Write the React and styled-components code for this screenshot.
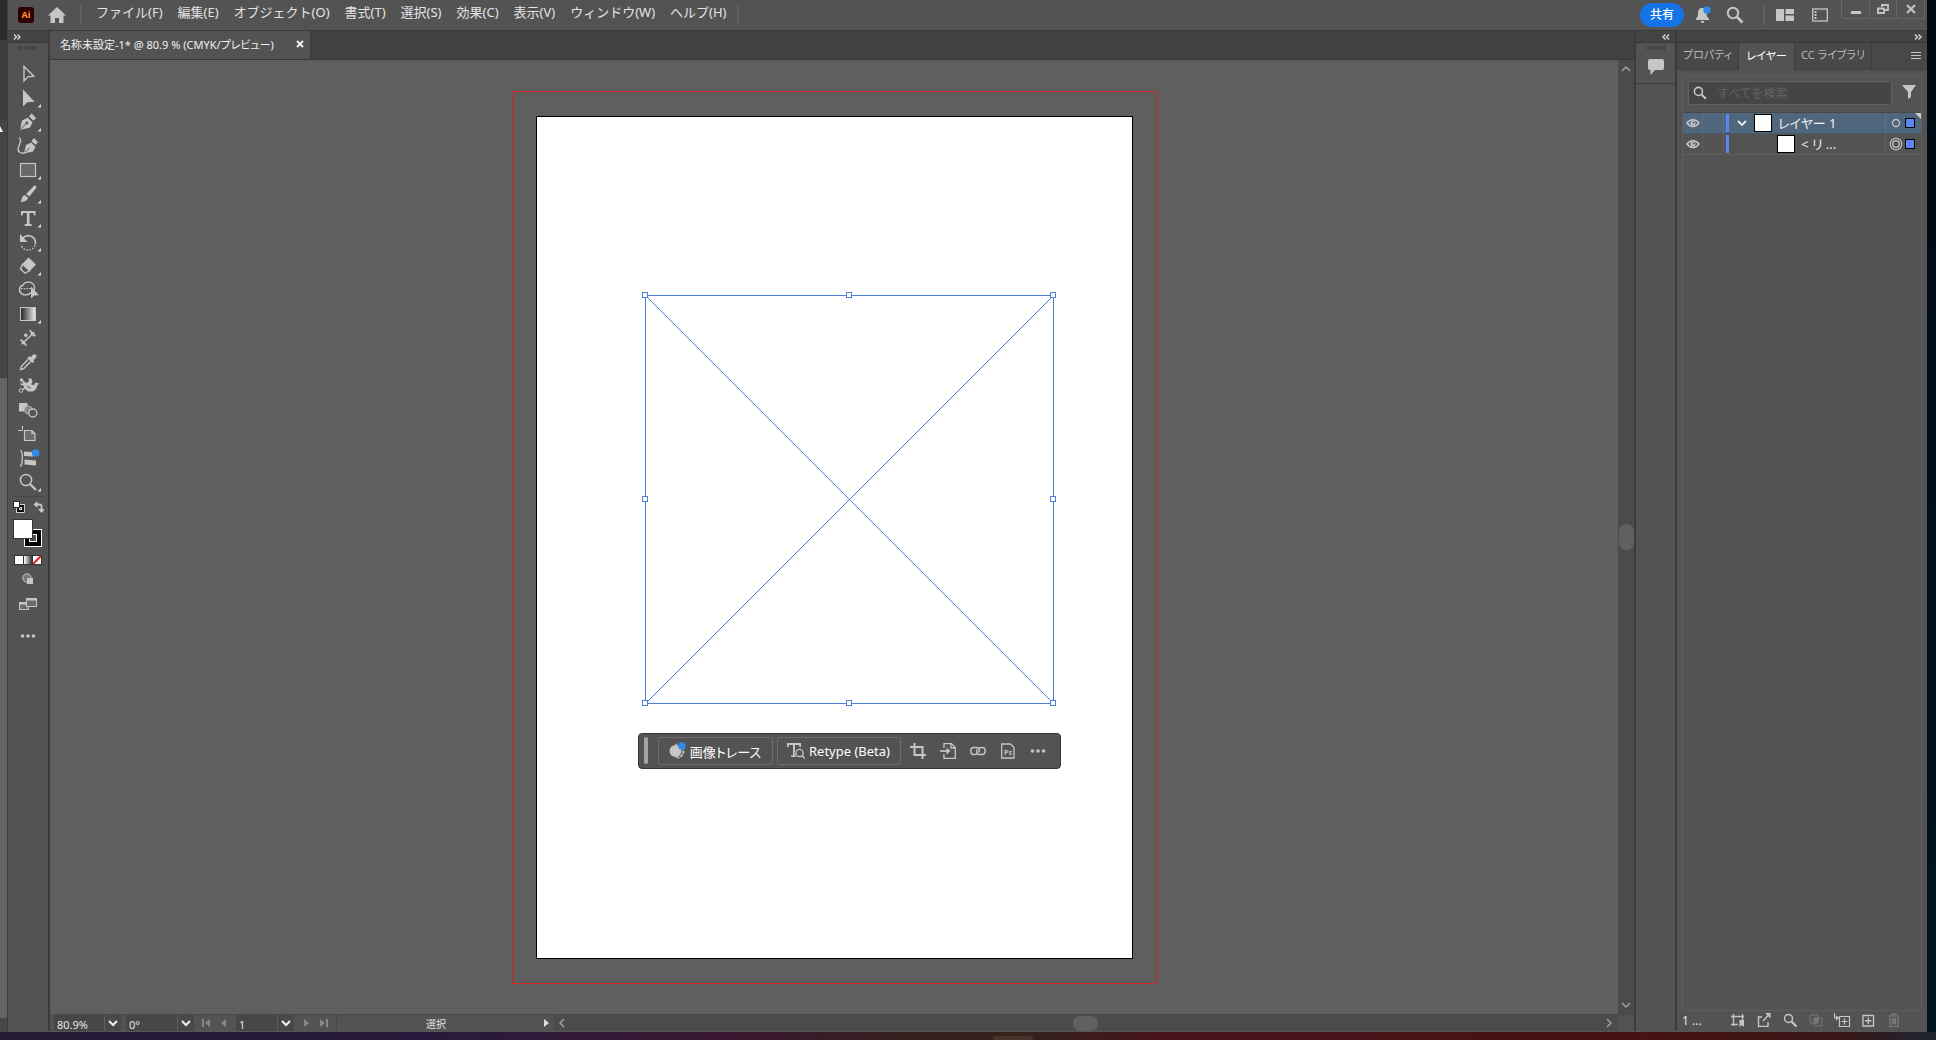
import React, { useState } from "react";
import styled, { createGlobalStyle, css } from "styled-components";

const GlobalStyle = createGlobalStyle`
    * { box-sizing: border-box; }
    html, body { margin: 0; height: 100%; }
    body {
        background: #424242;
        color: #e4e4e4;
        font-family: "Noto Sans", "Noto Sans CJK JP", sans-serif;
        font-size: 13px;
        overflow: hidden;
    }
    button, input, select { font: inherit; color: inherit; }
    svg { display: block; flex: none; }
`;

const Screen = styled.div`
    display: flex;
    flex-direction: column;
    height: 100vh;
`;

const Desktop = styled.div`
    display: flex;
    flex: 1;
    min-height: 0;
`;

const BehindLeft = styled.div`
    position: relative;
    width: 8px;
    background: linear-gradient(#2b2b2b 40px, #3d3d3d 40px, #3d3d3d 120px, #454545 120px, #454545 378px, #646464 378px, #646464 1018px, #484848 1018px);
    border-right: 1px solid #3b3b3b;
`;

const PointerTail = styled.svg`
    position: absolute;
    left: 0;
    top: 126px;
`;

const BehindRight = styled.div`
    width: 9px;
    background: linear-gradient(#000a12, #001420);
`;

const Taskbar = styled.div`
    position: relative;
    height: 8px;
    background: linear-gradient(90deg, #231a33 0%, #281a3c 22%, #3a1630 38%, #35211c 48%, #35211c 54%, #48121c 60%, #481212 84%, #3a1718 95%, #1c2430 100%);
`;

const TaskbarItem = styled.div`
    position: absolute;
    left: 993px;
    bottom: 0;
    width: 40px;
    height: 4px;
    border-radius: 3px 3px 0 0;
    background: #48332a;
`;

const Window = styled.div`
    display: flex;
    flex-direction: column;
    flex: 1;
    min-width: 0;
    border-bottom: 1px solid #5c5357;
    background: #535353;
`;

const plainButton = css`
    display: flex;
    align-items: center;
    justify-content: center;
    padding: 0;
    border: 0;
    background: none;
`;

const IconButton = styled.button`
    ${plainButton}
    width: ${(p) => p.$w || 24}px;
    height: ${(p) => p.$h || 24}px;
    opacity: ${(p) => (p.disabled ? 0.3 : 1)};
`;

/* title bar */

const TitleBar = styled.header`
    display: flex;
    align-items: flex-start;
    height: 31px;
    border-bottom: 1px solid #3a3a3a;
`;

const AppBadge = styled.span`
    width: 16px;
    height: 16px;
    margin: 7px 0 0 10px;
    border-radius: 3px;
    background: #330000;
    color: #ff9a2e;
    font: bold 9px/15px "Open Sans", sans-serif;
    text-align: center;
`;

const Rule = styled.span`
    width: 2px;
    height: 20px;
    margin-top: 5px;
    background: #606060;
`;

const Menu = styled.nav`
    display: flex;
    gap: 15px;
    margin: 0 11px 0 14px;
    line-height: 24px;
    white-space: nowrap;
`;

const MenuItem = styled.button`
    padding: 0;
    border: 0;
    background: none;
`;

const Spacer = styled.span`
    flex: 1;
`;

const Share = styled.button`
    width: 44px;
    height: 24px;
    margin: 3px 7px 0 0;
    padding: 0;
    border: 0;
    border-radius: 12px;
    background: #1473e6;
    color: #fff;
    font-size: 12px;
    font-weight: 500;
    line-height: 24px;
`;

const TitleActions = styled.div`
    display: flex;
    align-items: center;
    gap: 8px;
    padding-top: 3px;
    margin-right: 16px;
`;

const ViewActions = styled.div`
    display: flex;
    gap: 11px;
    margin: 3px 9px 0 8px;
`;

const WindowControls = styled.div`
    display: flex;
    height: 19px;
    margin-right: 2px;
    border: 1px solid #666;
    border-top: 0;
    border-radius: 0 0 3px 3px;

    button + button { border-left: 1px solid #666; }
`;

/* work area */

const WorkArea = styled.div`
    display: flex;
    flex: 1;
    min-height: 0;
`;

const StripHead = styled.div`
    display: flex;
    align-items: center;
    justify-content: ${(p) => (p.$end ? "flex-end" : "flex-start")};
    height: 12px;
    padding: 0 5px;
    border-bottom: 1px solid #383838;
    background: #444;
`;

const ToolColumn = styled.aside`
    width: 42px;
    border-right: 2px solid #3b3b3b;
`;

const Grip = styled.div`
    width: 20px;
    height: 4px;
    margin: 3px auto 0;
    background: repeating-linear-gradient(90deg, #3d3d3d 0 1px, #535353 1px 2px);
`;

const Tools = styled.div`
    display: flex;
    flex-direction: column;
    align-items: center;
    margin-top: 12px;
    padding-bottom: 2px;
`;

const ToolFoot = styled.div`
    display: flex;
    flex-direction: column;
    align-items: center;
    margin: 0 4px;
    border-top: 1px solid #484848;
`;

const Documents = styled.main`
    display: flex;
    flex-direction: column;
    flex: 1;
    min-width: 0;
    border-right: 2px solid #3b3b3b;
`;

const DocumentTabs = styled.div`
    display: flex;
    height: 29px;
    border-bottom: 1px solid #383838;
    background: #424242;
`;

const DocumentTab = styled.div`
    display: flex;
    align-items: center;
    justify-content: space-between;
    width: 261px;
    padding: 0 6px 2px 10px;
    border-right: 1px solid #383838;
    background: #535353;
    color: #f0f0f0;
    font-size: 11px;
    font-feature-settings: "palt";
    white-space: nowrap;
`;

const CanvasRow = styled.div`
    display: flex;
    flex: 1;
    min-height: 0;
`;

const Canvas = styled.div`
    display: flex;
    flex: 1;
    align-items: center;
    justify-content: center;
    min-width: 0;
    background: #5f5f5f;
`;

const Bleed = styled.div`
    padding: 24px 23px;
    border: 1px solid #d02626;
`;

const Artboard = styled.div`
    position: relative;
    width: 597px;
    height: 843px;
    border: 1px solid #000;
    background: #fff;
`;

const PlacedImage = styled.svg`
    position: absolute;
    left: 104px;
    top: 174px;
`;

const ContextBar = styled.div`
    position: absolute;
    left: 101px;
    top: 616px;
    display: flex;
    align-items: center;
    width: 423px;
    height: 36px;
    padding: 0 9px 0 5px;
    border: 1px solid #363636;
    border-radius: 4px;
    background: #535353;
`;

const ContextGrip = styled.span`
    width: 4px;
    height: 27px;
    margin-right: 10px;
    border-radius: 2px;
    background: #a5a5a5;
`;

const ContextButton = styled.button`
    display: flex;
    align-items: center;
    justify-content: center;
    gap: 4px;
    width: ${(p) => p.$w}px;
    height: 28px;
    margin-right: 4px;
    padding: 1px 0 0;
    border: 1px solid #6c6c6c;
    border-radius: 2px;
    background: none;
    color: #fff;
    font-size: 13px;
    font-feature-settings: "palt";
    white-space: nowrap;
`;

const ContextIcons = styled.div`
    display: flex;
    flex: 1;
    justify-content: space-between;
`;

const VerticalScroll = styled.div`
    display: flex;
    flex-direction: column;
    align-items: center;
    justify-content: space-between;
    width: 16px;
    background: #4b4b4b;
`;

const HorizontalScroll = styled.div`
    display: flex;
    flex: 1;
    align-items: center;
    justify-content: space-between;
    background: #4b4b4b;
`;

const Thumb = styled.span`
    width: ${(p) => p.$w}px;
    height: ${(p) => p.$h}px;
    border-radius: 7px;
    background: #606060;
`;

const ScrollCorner = styled.span`
    width: 16px;
    background: #535353;
`;

const StatusBar = styled.footer`
    display: flex;
    height: 17px;
    padding-left: 4px;
    border-top: 1px solid #484848;
    background: #535353;
    font-size: 11px;
`;

const Field = styled.label`
    position: relative;
    width: ${(p) => p.$w}px;
    margin-right: ${(p) => p.$gap || 0}px;
    background: #474747;
    overflow: hidden;
`;

const FieldSelect = styled.select`
    appearance: none;
    width: 100%;
    height: 19px;
    padding: 0 18px 0 3px;
    border: 0;
    background: none;
    line-height: 19px;
`;

const FieldArrow = styled.span`
    position: absolute;
    top: 0;
    right: 0;
    display: flex;
    align-items: center;
    justify-content: center;
    width: 17px;
    height: 16px;
    border-left: 1px solid #5e5e5e;
    background: #484848;
    pointer-events: none;
`;

const Nav = styled.div`
    display: flex;
    width: 42px;
    justify-content: center;
`;

const StatusText = styled.span`
    flex: none;
    width: 201px;
    border-left: 1px solid #484848;
    padding-right: 2px;
    font-size: 10px;
    line-height: 18px;
    text-align: center;
`;

/* panels */

const Docks = styled.aside`
    display: flex;
    width: 291px;
`;

const CollapsedDock = styled.div`
    width: 41px;
    border-right: 2px solid #3b3b3b;
`;

const DockIcon = styled.div`
    display: flex;
    justify-content: center;
    height: 34px;
    border-bottom: 1px solid #3b3b3b;

    button { margin-top: 5px; }
`;

const PanelColumn = styled.div`
    display: flex;
    flex-direction: column;
    flex: 1;
    min-width: 0;
`;

const PanelTabs = styled.div`
    display: flex;
    height: 27px;
    border-bottom: 1px solid #3e3e3e;
    background: #484848;
    font-size: 11px;
    font-feature-settings: "palt";
`;

const PanelTab = styled.button`
    width: ${(p) => p.$w}px;
    height: ${(p) => (p.$active ? 27 : 26)}px;
    padding: 0 0 4px;
    border: 0;
    border-right: 1px solid #3e3e3e;
    background: ${(p) => (p.$active ? "#535353" : "#484848")};
    color: ${(p) => (p.$active ? "#fff" : "#b8b8b8")};
    white-space: nowrap;
`;

const PanelBody = styled.section`
    display: flex;
    flex-direction: column;
    flex: 1;
    margin: 6px 5px 0 5px;
    border: 1px solid #5e5e5e;
    border-radius: 2px;
`;

const SearchRow = styled.div`
    display: flex;
    align-items: center;
    gap: 5px;
    height: 36px;
    padding: 0 0 5px 5px;
    border-bottom: 1px solid #484848;
`;

const SearchBox = styled.label`
    display: flex;
    flex: 1;
    align-items: center;
    height: 24px;
    margin-top: 2px;
    min-width: 0;
    padding-left: 4px;
    border: 1px solid #626262;
    border-radius: 3px;
    background: #454545;
`;

const SearchInput = styled.input`
    flex: 1;
    min-width: 0;
    padding: 0 10px;
    border: 0;
    outline: 0;
    background: none;
    font-size: 12px;

    &::placeholder { color: #636363; opacity: 1; }
`;

const LayerList = styled.ul`
    margin: 0;
    padding: 0;
    list-style: none;
`;

const LayerRow = styled.li`
    position: relative;
    display: flex;
    align-items: center;
    height: 21px;
    border-bottom: 1px solid ${(p) => (p.$active ? "#48596a" : "#616161")};
    background: ${(p) => (p.$active ? "#50667d" : "transparent")};
`;

const LayerCell = styled.span`
    display: flex;
    align-items: center;
    justify-content: center;
    align-self: stretch;
    width: ${(p) => p.$w}px;
    border-right: 1px solid rgba(255, 255, 255, 0.08);
`;

const LayerColor = styled.span`
    width: 3px;
    height: 18px;
    margin: 0 2px;
    background: #5b86f2;
`;

const LayerThumb = styled.span`
    width: 18px;
    height: 18px;
    margin-left: ${(p) => (p.$child ? 24 : 1)}px;
    border: 1px solid #000;
    background: #fff;
`;

const LayerName = styled.span`
    flex: 1;
    padding-left: 6px;
    color: #f0f0f0;
    font-size: 13px;
    line-height: 20px;
    font-feature-settings: "palt";
    white-space: nowrap;
`;

const LayerMarks = styled.span`
    display: flex;
    align-items: center;
    align-self: stretch;
    gap: 3px;
    width: 36px;
    padding-left: 3px;
    border-left: 1px solid rgba(255, 255, 255, 0.08);
`;

const SelectedMark = styled.span`
    width: 8px;
    height: 8px;
    outline: 1px solid #000;
    background: #5b86f2;
`;

const Corner = styled.span`
    position: absolute;
    top: 0;
    right: 0;
    border-top: 6px solid #d0d0d0;
    border-left: 6px solid transparent;
`;

const PanelFoot = styled.footer`
    display: flex;
    align-items: center;
    height: 20px;
    padding: 0 21px 2px 5px;
    font-size: 12px;
`;

const FootIcons = styled.div`
    display: flex;
    flex: 1;
    justify-content: flex-end;
    gap: 2px;
`;

/* icons */

const C = "#c6c6c6";

const Glyph = ({ w = 24, h = 24, children, ...rest }) => (
    <svg width={w} height={h} viewBox={`0 0 ${w} ${h}`} fill="none" stroke="none" aria-hidden="true" {...rest}>
        {children}
    </svg>
);

const Line = (props) => <path stroke={C} strokeWidth="1.5" {...props} />;
const Solid = (props) => <path fill={C} {...props} />;

const Chevron = ({ dir = "down", color = C, strokeWidth = 1.5 }) => {
    const d = {
        down: "M2 4l4 4 4-4",
        up: "M2 8l4-4 4 4",
        left: "M8 2L4 6l4 4",
        right: "M4 2l4 4-4 4",
    }[dir];
    return <Glyph w={12} h={12}><path d={d} stroke={color} strokeWidth={strokeWidth} /></Glyph>;
};

const DoubleChevron = ({ left }) => (
    <Glyph w={8} h={6}>
        <path d={left ? "M3.5 .5L1 3l2.5 2.5M7 .5L4.5 3 7 5.5" : "M1 .5L3.5 3 1 5.5M4.5 .5L7 3 4.5 5.5"} stroke="#d6d6d6" strokeWidth="1.4" />
    </Glyph>
);

// every tool glyph sits in a 32x24 box
const tools = [
    { name: "選択ツール", icon: <Line d="M12 4.5V19l3.800-4.200 6-.6z" strokeWidth="1.4" /> },
    { name: "ダイレクト選択ツール", more: true, icon: <Solid d="M11 3.5V20.5l4.3-4.2 7.2-.5z" /> },
    {
        name: "ペンツール", more: true, icon: <>
            <Solid d="M8 19.8l2-9.2 5.8-2.8 4.8 4.8-2.8 5.2zM17 6.3l2.600-2.800 4.500 4.600-2.600 2.600z" />
            <path d="M8.3 19.4l5.800-5.800" stroke="#535353" /><circle cx="14.8" cy="13" r="1.4" fill="#535353" />
        </>,
    },
    {
        name: "曲線ツール", icon: <>
            <Solid d="M12 19.5l2-8.500 5.200-2.500 4.300 4.500-2.600 4.500zM19.500 7l2.500-3 4 4.200-2.600 2.500z" />
            <path d="M12.500 19l5-5.300" stroke="#535353" />
            <Line d="M7 3.500c2.500 2 2 4 .5 7s-2 6.500.5 8c1.800 1 3.800.8 5.500 0" strokeWidth="1.4" />
        </>,
    },
    { name: "長方形ツール", more: true, icon: <rect x="8.5" y="5.5" width="15" height="13" fill="#686868" stroke={C} strokeWidth="1.2" /> },
    {
        name: "ブラシツール", more: true, icon: <>
            <Solid d="M23.800 3.800c1 .8.6 1.800 0 2.600l-6.500 8.200-3.200-2.600 7.300-7.600c.8-.8 1.600-1.200 2.400-.6zM13 13.200l3 2.500c-.4 3-3.500 4.600-8.200 4 2-1.200 1.800-2.200 2.200-3.800.4-1.600 1.600-2.600 3-2.700z" />
        </>,
    },
    { name: "文字ツール", more: true, icon: <Solid d="M9 5h14.500v4.500H22L21.400 7h-3.900v10.800l2.300.5V20h-7.200v-1.700l2.300-.5V7h-3.700l-.7 2.500H9z" /> },
    {
        name: "回転ツール", more: true, icon: <>
            <Line d="M11 8c4-4 11-2.500 12.300 3.300.2 1 .2 2 0 3" strokeWidth="1.7" /><Solid d="M8 4v8h7.500z" />
            <path d="M23 15.500c-2 5-8.500 6-12 2.500-1-1-1.700-2.200-2-3.500" stroke={C} strokeWidth="1.5" strokeDasharray="1.5 1.5" />
        </>,
    },
    {
        name: "消しゴムツール", more: true, icon: <>
            <Solid d="M16.500 3.500l7.500 7-6 6.200-7.500-7z" />
            <Line d="M10.500 10.300L8.500 15l4.600 4.200 4.600-2.500z" strokeWidth="1.4" />
        </>,
    },
    {
        name: "シェイプ形成ツール", icon: <>
            <Line d="M19 14.500c-2 2.700-6.500 3-9.200 1.300-3.600-2.300-2.800-7.800 1.200-8.600C12.500 3 20.500 3 22.300 8c.5 1.600.3 3.400-.4 4.700" strokeWidth="1.4" />
            <Line d="M9 10.700h11" strokeWidth="1.3" strokeDasharray="1.5 1.2" /><Solid d="M19 8.500v12l3-3 5-.2z" />
        </>,
    },
    {
        name: "グラデーションツール", more: true, icon: <>
            <defs><linearGradient id="toolGradient"><stop stopColor="#222" /><stop offset="1" stopColor="#eee" /></linearGradient></defs>
            <rect x="8.5" y="5.5" width="15" height="13" fill="url(#toolGradient)" stroke={C} />
        </>,
    },
    {
        name: "ものさしツール", icon: <>
            <Line d="M11 17L21 7.500M8.500 13.500l6 6.300M17.500 4l6 6.300" strokeWidth="1.5" />
            <Solid d="M9.500 18.500l.6-5 4.300 4.300zM22.500 6l-.6 5-4.300-4.300zM11.500 9l2.500-2 2 2.500-2.500 2z" />
        </>,
    },
    {
        name: "スポイトツール", icon: <>
            <Solid d="M18.700 7.300l2-2.300c1-1 2.500-1 3.200-.2.800.8.800 2.200-.2 3.200l-2.300 2.200 1 1-2 1.800-5-5 1.800-1.800z" />
            <Line d="M16.300 9.300l-7 7.200-.8 3 3-.7 7.200-7.200" strokeWidth="1.4" />
        </>,
    },
    {
        name: "パペットワープツール", icon: <>
            <Solid d="M10 5.500l4 3.500 3-1.500-.5-3 3 0 1 3.500-1.500 2.500 3 .5 1.500-2.500 3.500 1-1.500 1.500-1.500 4-3 2.500h-5l-3-2.500-1.500-3z" />
            <Line d="M8.500 10l5 1M9.500 16.500l5-4" strokeWidth="1.5" />
            <path d="M15 12l4 2.500" stroke="#535353" />
            <circle cx="9" cy="16.500" r="1.800" fill="#535353" stroke={C} /><circle cx="9.500" cy="6" r="1.700" fill={C} />
        </>,
    },
    {
        name: "ブレンドツール", icon: <>
            <rect x="7" y="5" width="8.5" height="8.5" fill={C} />
            <circle cx="16.500" cy="12" r="4" fill="#858585" stroke="#a8a8a8" /><circle cx="20.800" cy="15" r="4" fill="#535353" stroke={C} strokeWidth="1.3" />
        </>,
    },
    {
        name: "アートボードツール", icon: <>
            <path d="M12.500 8.500H20l3 3v7H12.500z" fill="#6d6d6d" stroke={C} strokeWidth="1.2" />
            <Line d="M6 8.500h5M10.500 4v3.500M20 8.500v3h3" strokeWidth="1.2" />
        </>,
    },
    {
        name: "配置ツール", icon: <>
            <Line d="M8.500 4c2 2 1.800 4 1.800 8s.2 6-1.800 8.500" strokeWidth="1.3" />
            <Solid d="M12 5.500l9 .5v4.500l-9-.5zM12.500 13.500l11.500 1v5l-11.500-1z" /><circle cx="23.600" cy="7" r="3.800" fill="#2d8ceb" />
        </>,
    },
    {
        name: "ズームツール", more: true, icon: <>
            <circle cx="14" cy="10" r="5.600" stroke={C} strokeWidth="1.5" /><Line d="M18 14l6 6" strokeWidth="2.2" />
        </>,
    },
];

const ToolGlyph = ({ icon, more }) => (
    <Glyph w={32} h={24}>
        {icon}
        {more && <path d="M29 18v3.500h-3.500z" fill="#dedede" />}
    </Glyph>
);

const ColorGlyph = () => (
    <Glyph w={32} h={57}>
        <path d="M6 9h5v5H6z" stroke="#fff" strokeWidth="3.400" /><path d="M6 9h5v5H6z" stroke="#000" strokeWidth="1.800" />
        <path d="M1.500 4.500h6v6h-6z" fill="#fff" stroke="#222" />
        <path d="M24 7.500h3.500c1.500 0 2 .8 2 2V13" stroke={C} strokeWidth="1.800" />
        <path d="M25.500 4v7L21.500 7.500zM26 12h7l-3.500 4z" fill={C} />
        <rect x="12.500" y="32.500" width="17" height="17" fill="#000" stroke="#fff" />
        <rect x="17.500" y="37.500" width="7" height="7" fill="#535353" stroke="#fff" />
        <rect x="1.500" y="22.500" width="19" height="19" fill="#fff" stroke="#333" />
    </Glyph>
);

const ModeGlyph = () => (
    <Glyph w={28} h={10}>
        <defs><linearGradient id="modeGradient"><stop stopColor="#fff" /><stop offset="1" stopColor="#333" /></linearGradient></defs>
        <rect x=".5" y=".5" width="27" height="9" fill="#fff" stroke="#333" />
        <rect x="10" y="1" width="8" height="8" fill="url(#modeGradient)" />
        <path d="M9.500 1v8M18.500 1v8" stroke="#333" />
        <path d="M19 9l8-8" stroke="#e01e1e" strokeWidth="2" />
    </Glyph>
);

const Search = ({ size = 18 }) => (
    <svg width={size} height={size} viewBox="0 0 18 18" fill="none" stroke={C} aria-hidden="true">
        <circle cx="7" cy="7" r="5.200" strokeWidth="2" /><path d="M11 11l5.500 5.500" strokeWidth="2.600" />
    </svg>
);

const Eye = () => (
    <Glyph w={14} h={10}>
        <path d="M1 5c3-4.500 9-4.500 12 0-3 4.500-9 4.500-12 0z" stroke={C} strokeWidth="1.500" />
        <circle cx="7" cy="5" r="2.500" fill={C} /><circle cx="7.600" cy="4.600" r="1" fill="#535353" />
    </Glyph>
);

const Dots = ({ w = 16 }) => (
    <Glyph w={w} h={6}>
        {[-5.5, 0, 5.5].map((x) => <circle key={x} cx={w / 2 + x} cy="3" r="1.8" fill={C} />)}
    </Glyph>
);

const menus = ["ファイル(F)", "編集(E)", "オブジェクト(O)", "書式(T)", "選択(S)", "効果(C)", "表示(V)", "ウィンドウ(W)", "ヘルプ(H)"];

const contextIcons = [
    { name: "画像を切り抜き", icon: <Line d="M4.500 0v12H16M0 4h12.500v12" strokeWidth="2" /> },
    { name: "埋め込み", icon: <><Line d="M4 5V.7h7.500L15.300 4.500V15.300H4V11M11 1v4h4" strokeWidth="1.300" /><Line d="M0 8h8" strokeWidth="1.700" /><Solid d="M6.500 4.500L10.500 8l-4 3.500z" /></> },
    { name: "リンク", icon: <Line d="M7 10.800c-1 .6-2.200.7-3.200.7C2 11.500.8 10 .8 8S2 4.500 4 4.500h2c2 0 3.300 1.300 3.300 3.300 0 .7-.1 1.200-.5 1.700M9 5.200c1-.6 2.200-.7 3.200-.7 1.800 0 3 1.500 3 3.500s-1.200 3.500-3.200 3.500h-2c-2 0-3.300-1.300-3.300-3.300 0-.7.1-1.200.5-1.700" strokeWidth="1.500" /> },
    { name: "Photoshop で編集", icon: <><Line d="M1.700 1h8.800L14 4.500V15H1.700z" strokeWidth="1.300" /><text x="4" y="11.500" fill={C} fontSize="7" fontWeight="bold" fontFamily="Open Sans">Ps</text></> },
];

const footIcons = [
    { name: "書き出し用に追加", icon: <><Line d="M2.500 1v12M0 3.500h13M11.500 1v6M0 11.500h7" strokeWidth="1.300" /><Solid d="M8.500 7H13v7l-2.200-2L8.500 14z" /></> },
    { name: "書き出し", icon: <><Line d="M5 4H1.500v9.500h9.500V9M6 8l6-6.500" strokeWidth="1.400" /><Solid d="M8 0h5.500v5.500z" /></> },
    { name: "オブジェクトの位置", icon: <><circle cx="5.500" cy="5.500" r="4" stroke={C} strokeWidth="1.500" /><Line d="M8.500 8.500l5 5" strokeWidth="2.200" /></> },
    { name: "クリッピングマスク", disabled: true, icon: <><path d="M1 2h8v8H1zM5 5h8v8H5z" stroke="#ccc" /><path d="M5 5h5v5H5z" fill="#ccc" /></> },
    { name: "新規サブレイヤー", w: 18, icon: <><Line d="M6.500 3.500h10v10h-10zM11.500 5.500v6M8.500 8.500h6M1.500 0v5H4" strokeWidth="1.200" /><Solid d="M3 2.500L6.500 5 3 7.500z" /></> },
    { name: "新規レイヤー", icon: <Line d="M2 2.500h10.500V13H2zM7.250 4.500V11M4 7.750h6.500" strokeWidth="1.300" /> },
    { name: "削除", disabled: true, icon: <path d="M1.500 3h11M5 3V1h4v2M3 3v10.500h8V3M5.500 5v6.500M7 5v6.500M8.500 5v6.500" stroke="#ddd" strokeWidth="1.200" /> },
];

const StatusField = ({ label, value, options, w, gap }) => (
    <Field $w={w} $gap={gap}>
        <FieldSelect aria-label={label} defaultValue={value}>
            {options.map((o) => <option key={o}>{o}</option>)}
        </FieldSelect>
        <FieldArrow><Chevron color="#eee" strokeWidth={2} /></FieldArrow>
    </Field>
);

const handles = [[0, 0], [204, 0], [408, 0], [0, 204], [408, 204], [0, 408], [204, 408], [408, 408]];

const SelectionFrame = () => (
    <PlacedImage width="417" height="417" fill="none" stroke="#4f80d9">
        <path d="M4.500 4.500h408v408h-408zM4.500 4.500l408 408M412.500 4.500l-408 408" />
        {handles.map(([x, y]) => <rect key={x + "-" + y} x={x + 1.5} y={y + 1.5} width="5" height="5" fill="#fff" />)}
    </PlacedImage>
);

const DocumentArea = () => (
    <Documents>
        <DocumentTabs>
            <DocumentTab>
                <span>名称未設定-1* @ 80.9 % (CMYK/プレビュー)</span>
                <IconButton $w={8} $h={8} aria-label="閉じる">
                    <Glyph w={8} h={8}><path d="M1 1l6 6M7 1L1 7" stroke="#eee" strokeWidth="2" /></Glyph>
                </IconButton>
            </DocumentTab>
        </DocumentTabs>
        <CanvasRow>
            <Canvas>
                <Bleed>
                    <Artboard>
                        <SelectionFrame />
                        <ContextBar>
                            <ContextGrip />
                            <ContextButton $w={115}>
                                <Glyph w={17} h={18}>
                                    <path d="M13 5c3 4 1 9-3 10.500" stroke={C} strokeWidth="2" strokeDasharray="3 1" />
                                    <circle cx="6.500" cy="9" r="6" fill={C} /><path d="M6 15l4 2-1-3zM6 3l2-2v3z" fill={C} />
                                    <circle cx="13" cy="4" r="3.800" fill="#2d8ceb" />
                                </Glyph>
                                画像トレース
                            </ContextButton>
                            <ContextButton $w={124}>
                                <Glyph w={18} h={18}>
                                    <Solid d="M0 1h14v4h-1.500L12 3H8v10.500h2V15H4v-1.500h2V3H2L1.500 5H0z" />
                                    <circle cx="12.500" cy="11" r="5" fill="#535353" /><circle cx="12.500" cy="11" r="3.600" stroke={C} strokeWidth="1.300" />
                                    <Line d="M15 13.500l3 3" />
                                </Glyph>
                                Retype (Beta)
                            </ContextButton>
                            <ContextIcons>
                                {contextIcons.map((i) => (
                                    <IconButton key={i.name} $w={26} aria-label={i.name}><Glyph w={16} h={16}>{i.icon}</Glyph></IconButton>
                                ))}
                                <IconButton $w={26} aria-label="その他"><Dots /></IconButton>
                            </ContextIcons>
                        </ContextBar>
                    </Artboard>
                </Bleed>
            </Canvas>
            <VerticalScroll>
                <IconButton $w={16} $h={18} aria-label="上へ"><Chevron dir="up" color="#a0a0a0" /></IconButton>
                <Thumb $w={15} $h={26} />
                <IconButton $w={16} $h={18} aria-label="下へ"><Chevron color="#a0a0a0" /></IconButton>
            </VerticalScroll>
        </CanvasRow>
        <StatusBar>
            <StatusField label="ズーム" value="80.9%" options={["80.9%", "100%"]} w={67} gap={5} />
            <StatusField label="回転" value="0°" options={["0°", "90°"]} w={68} />
            <Nav>
                <IconButton $w={18} $h={16} disabled aria-label="最初"><Glyph w={10} h={10}><path d="M1 1h2v8H1zM9 1v8L4 5z" fill="#fff" /></Glyph></IconButton>
                <IconButton $w={18} $h={16} disabled aria-label="前へ"><Glyph w={10} h={10}><path d="M7 1v8L2 5z" fill="#fff" /></Glyph></IconButton>
            </Nav>
            <StatusField label="アートボード" value="1" options={["1"]} w={58} />
            <Nav>
                <IconButton $w={18} $h={16} disabled aria-label="次へ"><Glyph w={10} h={10}><path d="M3 1v8l5-4z" fill="#fff" /></Glyph></IconButton>
                <IconButton $w={18} $h={16} disabled aria-label="最後"><Glyph w={10} h={10}><path d="M7 1h2v8H7zM1 1v8l5-4z" fill="#fff" /></Glyph></IconButton>
            </Nav>
            <StatusText>選択</StatusText>
            <IconButton $w={17} $h={16} aria-label="表示"><Glyph w={8} h={10}><path d="M2 1v8l5-4z" fill="#ddd" /></Glyph></IconButton>
            <HorizontalScroll>
                <IconButton $w={16} $h={16} aria-label="左へ"><Chevron dir="left" color="#a0a0a0" /></IconButton>
                <Thumb $w={25} $h={15} />
                <IconButton $w={18} $h={16} aria-label="右へ"><Chevron dir="right" color="#a0a0a0" /></IconButton>
            </HorizontalScroll>
            <ScrollCorner />
        </StatusBar>
    </Documents>
);

const LayersPanel = () => {
    const [query, setQuery] = useState("");

    return (
        <PanelBody>
            <SearchRow>
                <SearchBox>
                    <Search size={14} />
                    <SearchInput aria-label="すべてを検索" placeholder="すべてを検索" value={query} onChange={(e) => setQuery(e.target.value)} />
                </SearchBox>
                <IconButton aria-label="フィルター"><Glyph w={14} h={16}><Solid d="M0 1h14L9 8v5l-3 2V8z" /></Glyph></IconButton>
            </SearchRow>
            <LayerList>
                <LayerRow $active>
                    <LayerCell $w={20}><Eye /></LayerCell>
                    <LayerCell $w={21} />
                    <LayerColor />
                    <IconButton $w={22} $h={20} aria-label="展開"><Chevron color="#eee" strokeWidth={1.8} /></IconButton>
                    <LayerThumb />
                    <LayerName>レイヤー 1</LayerName>
                    <LayerMarks>
                        <Glyph w={14} h={14}><circle cx="7" cy="7" r="3.500" stroke={C} strokeWidth="1.300" /></Glyph>
                        <SelectedMark />
                    </LayerMarks>
                    <Corner />
                </LayerRow>
                <LayerRow>
                    <LayerCell $w={20}><Eye /></LayerCell>
                    <LayerCell $w={21} />
                    <LayerColor />
                    <IconButton as="span" $w={22} $h={20} />
                    <LayerThumb $child />
                    <LayerName>&lt; リ ...</LayerName>
                    <LayerMarks>
                        <Glyph w={14} h={14}><circle cx="7" cy="7" r="5.800" stroke={C} strokeWidth="1.100" /><circle cx="7" cy="7" r="3.300" stroke={C} strokeWidth="1.300" /></Glyph>
                        <SelectedMark />
                    </LayerMarks>
                </LayerRow>
            </LayerList>
        </PanelBody>
    );
};

const Panels = () => (
    <Docks>
        <CollapsedDock>
            <StripHead $end><DoubleChevron left /></StripHead>
            <Grip />
            <DockIcon>
                <IconButton aria-label="コメント">
                    <Glyph w={18} h={18}><Solid d="M3 1h12q2 0 2 2v7q0 2-2 2H8l-4.500 5V12H3q-2 0-2-2V3q0-2 2-2z" /></Glyph>
                </IconButton>
            </DockIcon>
        </CollapsedDock>
        <PanelColumn>
            <StripHead $end><DoubleChevron /></StripHead>
            <PanelTabs>
                <PanelTab $w={62}>プロパティ</PanelTab>
                <PanelTab $w={56} $active>レイヤー</PanelTab>
                <PanelTab $w={77}>CC ライブラリ</PanelTab>
                <Spacer />
                <IconButton $w={22} $h={26} aria-label="パネルメニュー"><Glyph w={10} h={8}><path d="M0 .5h10M0 3.500h10M0 6.500h10" stroke={C} /></Glyph></IconButton>
            </PanelTabs>
            <LayersPanel />
            <PanelFoot>
                <span>1 ...</span>
                <FootIcons>
                    {footIcons.map((i) => (
                        <IconButton key={i.name} $h={18} disabled={i.disabled} aria-label={i.name}><Glyph w={i.w || 14} h={14}>{i.icon}</Glyph></IconButton>
                    ))}
                </FootIcons>
            </PanelFoot>
        </PanelColumn>
    </Docks>
);

export default function App() {
    return (
        <Screen>
            <GlobalStyle />
            <Desktop>
                <BehindLeft>
                    <PointerTail width="3" height="7"><path d="M0 0l3 6H0z" fill="#fff" /></PointerTail>
                </BehindLeft>
                <Window>
                    <TitleBar>
                        <AppBadge>Ai</AppBadge>
                        <IconButton $w={46} $h={30} aria-label="ホーム">
                            <Glyph w={18} h={16}><Solid d="M9 0l9 8.500h-2.500V16H11v-5H7v5H2.500V8.500H0z" /></Glyph>
                        </IconButton>
                        <Rule />
                        <Menu>
                            {menus.map((m) => <MenuItem key={m}>{m}</MenuItem>)}
                        </Menu>
                        <Rule />
                        <Spacer />
                        <Share>共有</Share>
                        <TitleActions>
                            <IconButton aria-label="お知らせ">
                                <Glyph w={16} h={18}>
                                    <Solid d="M7 2c3 0 4.500 2 4.500 5 0 3.500 1 4.500 2.500 5.500V14H1v-1.500C2.500 11.500 3 10 3 7.500 3 4.500 4 2 7 2zM5.500 15h4q-.5 2-2 2t-2-2z" />
                                    <circle cx="12" cy="4" r="3.700" fill="#2d8ceb" />
                                </Glyph>
                            </IconButton>
                            <IconButton aria-label="検索"><Search size={18} /></IconButton>
                        </TitleActions>
                        <Rule />
                        <ViewActions>
                            <IconButton aria-label="ワークスペース"><Glyph w={18} h={12}><Solid d="M0 0h8v12H0zM9.500 0H18v5H9.500zM9.500 6.500H18V12H9.500z" /></Glyph></IconButton>
                            <IconButton aria-label="パネル表示"><Glyph w={16} h={14}><rect x=".7" y="1" width="14.600" height="12" stroke={C} strokeWidth="1.300" /><path d="M3.500 3v8" stroke={C} strokeWidth="2" strokeDasharray="2 1" /></Glyph></IconButton>
                        </ViewActions>
                        <WindowControls>
                            <IconButton $w={27} $h={18} aria-label="最小化"><Glyph w={10} h={12}><path d="M0 9.500h10" stroke={C} strokeWidth="3" /></Glyph></IconButton>
                            <IconButton $w={27} $h={18} aria-label="元に戻す"><Glyph w={12} h={12}><path d="M5 4V2h6v5H8M1 5.500h6v4.500H1z" stroke={C} strokeWidth="1.800" /></Glyph></IconButton>
                            <IconButton $w={28} $h={18} aria-label="閉じる"><Glyph w={10} h={10}><path d="M1 1l8 8M9 1L1 9" stroke={C} strokeWidth="2" /></Glyph></IconButton>
                        </WindowControls>
                    </TitleBar>
                    <WorkArea>
                        <ToolColumn>
                            <StripHead><DoubleChevron /></StripHead>
                            <Grip />
                            <Tools>
                                {tools.map((t) => (
                                    <IconButton key={t.name} $w={40} aria-label={t.name}><ToolGlyph {...t} /></IconButton>
                                ))}
                            </Tools>
                            <ToolFoot>
                                <IconButton $w={32} $h={57} aria-label="塗りと線"><ColorGlyph /></IconButton>
                                <IconButton $w={32} $h={12} aria-label="カラーモード"><ModeGlyph /></IconButton>
                                <IconButton $w={32} $h={26} aria-label="描画モード">
                                    <Glyph w={12} h={12}><circle cx="5" cy="5" r="4.200" fill="#777" stroke={C} /><path d="M5 5h6v6H5z" fill={C} /></Glyph>
                                </IconButton>
                                <IconButton $w={32} aria-label="スクリーンモード">
                                    <Glyph w={20} h={14}>
                                        <rect x="1.500" y="5.500" width="9" height="7" fill="#6a6a6a" stroke={C} /><path d="M1 5h10v2.500H1z" fill={C} />
                                        <rect x="8.500" y="1.500" width="10" height="8" fill="#6a6a6a" stroke={C} /><path d="M8 1h11v2.500H8z" fill={C} />
                                    </Glyph>
                                </IconButton>
                                <IconButton $w={32} $h={40} aria-label="ツールバーを編集"><Dots /></IconButton>
                            </ToolFoot>
                        </ToolColumn>
                        <DocumentArea />
                        <Panels />
                    </WorkArea>
                </Window>
                <BehindRight />
            </Desktop>
            <Taskbar><TaskbarItem /></Taskbar>
        </Screen>
    );
}
